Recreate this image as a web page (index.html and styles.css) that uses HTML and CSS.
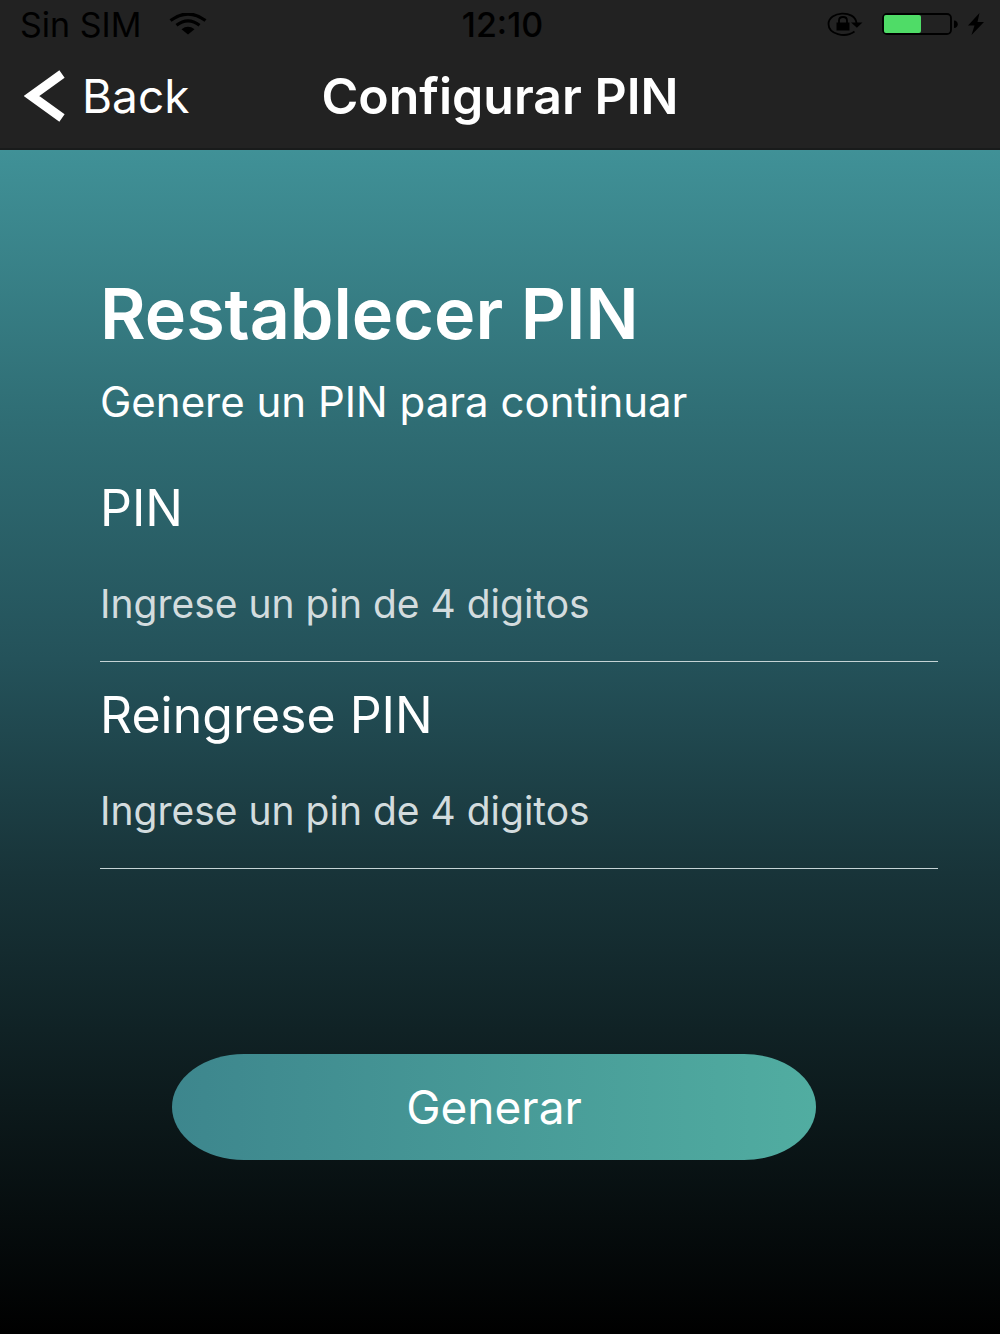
FILE: index.html
```html
<!DOCTYPE html>
<html lang="es">
<head>
<meta charset="utf-8">
<meta name="viewport" content="width=device-width, initial-scale=1">
<title>Configurar PIN</title>
<link rel="stylesheet" href="styles.css">
</head>
<body>

<header class="header">
  <div class="status-bar">
    <div class="status-left">
      <span>Sin SIM</span>
      <svg class="icon-wifi" viewBox="0 0 38 22" width="38" height="22">
        <path d="M1.500 7.500Q19-5.500 36.500 7.500M7.500 12.200Q19 3.500 30.500 12.200" fill="none" stroke="#000" stroke-width="3.200"/>
        <path d="M12.500 16.200Q19 11.500 25.500 16.200L19 21.500z"/>
      </svg>
    </div>
    <span class="status-time">12:10</span>
    <div class="status-right">
      <svg class="icon-lock" viewBox="0 0 36 24" width="36" height="24">
        <path d="M27.500 19.500C18 26.500 1.500 22 1.500 12C1.500-1 28-2.500 29.500 11" fill="none" stroke="#000" stroke-width="1.800"/>
        <path d="M24 10.500h11.500l-5.600 5.200z"/>
        <path d="M9.500 10.500h13v8h-13z"/>
        <path d="M12 11V8.500C12 3.800 20 3.800 20 8.500V11" fill="none" stroke="#000" stroke-width="1.800"/>
      </svg>
      <svg class="icon-battery" viewBox="0 0 76 22" width="76" height="22">
        <rect x="1" y="1" width="68" height="20" rx="4" fill="none" stroke="#000" stroke-width="1.800"/>
        <rect x="2" y="2" width="37" height="18" rx="2" fill="#4fdc67"/>
        <path d="M72 7.500C77 7.500 77 15 72 15z"/>
      </svg>
      <svg class="icon-charge" viewBox="0 0 18 22" width="18" height="22">
        <path d="M12.500 0L1 12.500h6.500L4.500 22L17 9h-6.500z"/>
      </svg>
    </div>
  </div>

  <nav class="nav-bar">
    <a class="back" href="#">
      <svg viewBox="0 0 42 52" width="42" height="52">
        <path d="M38 4L7.500 26L38 48" fill="none" stroke="#fff" stroke-width="9"/>
      </svg>
      Back
    </a>
    <h1>Configurar PIN</h1>
  </nav>
</header>

<main class="content">
  <h2>Restablecer PIN</h2>
  <p class="intro">Genere un PIN para continuar</p>

  <form class="pin-form">
    <div class="field">
      <label for="pin">PIN</label>
      <input type="password" id="pin" maxlength="4" inputmode="numeric" placeholder="Ingrese un pin de 4 digitos">
    </div>
    <div class="field">
      <label for="pin-repeat">Reingrese PIN</label>
      <input type="password" id="pin-repeat" maxlength="4" inputmode="numeric" placeholder="Ingrese un pin de 4 digitos">
    </div>
    <div class="actions">
      <button type="submit">Generar</button>
    </div>
  </form>
</main>

</body>
</html>
```

FILE: styles.css
```css
* {
  box-sizing: border-box;
}

body {
  margin: 0;
  min-height: 100vh;
  display: flex;
  flex-direction: column;
  background: #000;
  color: #fff;
  font-family: Inter, "Liberation Sans", sans-serif;
}

.header {
  background: #222;
  border-bottom: 2px solid #191b1b;
}

/* status bar */

.status-bar {
  display: grid;
  grid-template-columns: 1fr auto 1fr;
  align-items: center;
  height: 48px;
  padding: 0 15px 0 20px;
  color: #000;
  font-size: 34px;
}

.status-left,
.status-right {
  display: flex;
  align-items: center;
}

.status-left {
  gap: 28px;
}

.status-right {
  justify-content: flex-end;
}

.status-time {
  font-weight: 500;
}

.icon-lock {
  margin-right: 19px;
}

.icon-charge {
  margin-left: 9px;
}

/* navigation */

.nav-bar {
  display: grid;
  grid-template-columns: 1fr auto 1fr;
  align-items: center;
  height: 100px;
  padding: 0 24px 4px;
}

.nav-bar h1 {
  margin: 0;
  font-size: 50px;
  font-weight: 600;
}

.back {
  display: flex;
  align-items: center;
  gap: 16px;
  color: #fff;
  font-size: 46px;
  text-decoration: none;
}

/* content */

.content {
  flex: 1;
  padding: 124px 62px 0 100px;
  background: linear-gradient(#409197, #2f6d74 23%, #24525a 43%, #183439 61%, #0c191b 81%, #000);
}

.content h2 {
  margin: 0;
  font-size: 70px;
  font-weight: 600;
  line-height: 80px;
}

.intro {
  margin: 24px 0 0;
  font-size: 42px;
  line-height: 48px;
}

.pin-form {
  margin-top: 52px;
}

.field {
  display: flex;
  flex-direction: column;
  height: 207px;
}

.field label {
  font-size: 50px;
  line-height: 60px;
}

.field input {
  width: 100%;
  height: 112px;
  margin-top: 12px;
  padding: 0 0 4px;
  border: 0;
  border-bottom: 1px solid #c5d3d5;
  border-radius: 0;
  background: none;
  color: #fff;
  font: inherit;
  font-size: 39px;
  outline: 0;
}

.field input::placeholder {
  color: #d3dcde;
  opacity: 1;
}

.actions {
  padding: 162px 122px 0 72px;
}

.actions button {
  width: 100%;
  height: 106px;
  border: 0;
  border-radius: 72px / 53px;
  background: linear-gradient(to right, #3d868d, #51ada1);
  color: #fff;
  font: inherit;
  font-size: 46px;
}
```
